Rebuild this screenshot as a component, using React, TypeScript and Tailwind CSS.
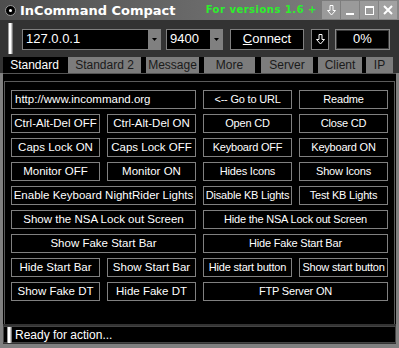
import React from "react";

type Cell = { label: string; span?: boolean; input?: boolean; tight?: boolean };

const rows: Cell[][] = [
  [{ label: "http://www.incommand.org", span: true, input: true }, { label: "<-- Go to URL", tight: true }, { label: "Readme", tight: true }],
  [{ label: "Ctrl-Alt-Del OFF" }, { label: "Ctrl-Alt-Del ON" }, { label: "Open CD", tight: true }, { label: "Close CD", tight: true }],
  [{ label: "Caps Lock ON" }, { label: "Caps Lock OFF" }, { label: "Keyboard OFF", tight: true }, { label: "Keyboard ON", tight: true }],
  [{ label: "Monitor OFF" }, { label: "Monitor ON" }, { label: "Hides Icons", tight: true }, { label: "Show Icons", tight: true }],
  [{ label: "Enable Keyboard NightRider Lights", span: true }, { label: "Disable KB Lights", tight: true }, { label: "Test KB Lights", tight: true }],
  [{ label: "Show the NSA Lock out Screen", span: true }, { label: "Hide the NSA Lock out Screen", span: true, tight: true }],
  [{ label: "Show Fake Start Bar", span: true }, { label: "Hide Fake Start Bar", span: true, tight: true }],
  [{ label: "Hide Start Bar" }, { label: "Show Start Bar" }, { label: "Hide start button", tight: true }, { label: "Show start button", tight: true }],
  [{ label: "Show Fake DT" }, { label: "Hide Fake DT" }, { label: "FTP Server ON", span: true, tight: true }],
];

const tabs = [
  { t: "Standard", c: "w-[63px]" },
  { t: "Standard 2", c: "ml-[2px] w-[73px]" },
  { t: "Message", c: "ml-[5px] w-[53px]" },
  { t: "More", c: "ml-[5px] w-[51px]" },
  { t: "Server", c: "ml-[6px] w-[52px]" },
  { t: "Client", c: "ml-[5px] w-[44px]" },
  { t: "IP", c: "ml-[4px] w-[27px]" },
];

function Grip({ h }: { h: string }) {
  return (
    <div className={`flex ${h} shrink-0`}>
      <div className="w-[1px] bg-[#9a9a9a]" />
      <div className="w-[2px] bg-white" />
      <div className="w-[1px] bg-[#c8c8c8]" />
      <div className="w-[1px] bg-[#7a7a7a]" />
    </div>
  );
}

function DownArrow({ color = "white" }: { color?: string }) {
  return (
    <svg width="9" height="11" viewBox="0 0 9 11">
      <path d="M3 0.5 H6 V5.5 H8.5 L4.5 10 L0.5 5.5 H3 Z" fill="none" stroke={color} strokeWidth="1" />
    </svg>
  );
}

function Combo({ value, w }: { value: string; w: string }) {
  return (
    <div className={`flex ${w} h-[21px] border border-[#808080] bg-black`}>
      <div className="flex-1 flex items-center pl-[3px] text-white text-[13px]">{value}</div>
      <div className="w-[12px] bg-[#808080] flex items-center justify-center">
        <svg width="5" height="3" viewBox="0 0 5 3">
          <path d="M0 0 H5 L2.5 3 Z" fill="#000" />
        </svg>
      </div>
    </div>
  );
}

export default function App() {
  return (
    <div
      className="w-[399px] h-[348px] bg-[#808080] flex flex-col overflow-hidden"
      style={{ fontFamily: '"Liberation Sans", Arial, sans-serif' }}
    >
      {/* Title bar */}
      <div className="h-[20px] flex items-center bg-gradient-to-r from-[#4e4e4e] via-[#6a6a6a] to-[#868686]">
        <div className="ml-[5px] w-[11px] h-[11px] rounded-full bg-black flex items-center justify-center border border-[#9a9a9a]">
          <div className="w-[3px] h-[3px] rounded-full bg-white" />
        </div>
        <div
          className="ml-[4px] text-white text-[13px] font-bold leading-none"
          style={{ fontFamily: '"DejaVu Sans", Verdana, sans-serif' }}
        >
          InCommand Compact
        </div>
        <div
          className="ml-auto mr-[5px] text-[#2cf02c] text-[10px] font-bold leading-none tracking-[0.5px]"
          style={{ fontFamily: '"DejaVu Sans", Verdana, sans-serif' }}
        >
          For versions 1.6 +
        </div>
        <div className="flex h-[18px] gap-[1px] mr-[2px]">
          <div className="w-[18px] bg-[#9a9a9a] flex items-center justify-center">
            <DownArrow />
          </div>
          <div className="w-[18px] bg-[#9a9a9a] flex items-end justify-center pb-[4px]">
            <div className="w-[8px] h-[2px] bg-white" />
          </div>
          <div className="w-[18px] bg-[#9a9a9a] flex items-center justify-center">
            <div className="w-[9px] h-[9px] border border-white border-t-2" />
          </div>
          <div className="w-[18px] bg-[#a2a2a2] flex items-center justify-center">
            <svg width="10" height="10" viewBox="0 0 10 10">
              <path d="M1 1 L9 9 M9 1 L1 9" stroke="white" strokeWidth="2" />
            </svg>
          </div>
        </div>
      </div>

      {/* Toolbar */}
      <div className="h-[37px] bg-[#333333] flex items-center pl-[8px]">
        <Grip h="h-[31px]" />
        <div className="ml-[9px] mt-[1px] flex items-center">
          <Combo value="127.0.0.1" w="w-[139px]" />
          <div className="ml-[5px]">
            <Combo value="9400" w="w-[57px]" />
          </div>
          <div className="ml-[7px] w-[74px] h-[21px] border border-[#808080] bg-black flex items-center justify-center text-white text-[13px]">
            <span className="underline underline-offset-[1px]">C</span>onnect
          </div>
          <div className="ml-[7px] w-[18px] h-[21px] border border-[#808080] bg-black flex items-center justify-center">
            <DownArrow />
          </div>
          <div className="ml-[6px] w-[55px] h-[21px] border border-[#8a8a8a] bg-black shadow-[inset_0_0_0_1px_#3a3a3a] flex items-center justify-center text-white text-[13px]">
            0%
          </div>
        </div>
      </div>

      {/* Tabs */}
      <div className="h-[16px] flex bg-[#333333] px-[3px]">
        <div className="h-full flex bg-black">
          {tabs.map((tab, i) => (
            <div
              key={tab.t}
              className={`${tab.c} text-[12px] leading-[16px] text-center ${
                i === 0 ? "bg-black text-white" : "bg-[#7c7c7c] text-[#1a1a1a]"
              }`}
            >
              {tab.t}
            </div>
          ))}
        </div>
      </div>

      {/* Panel */}
      <div className="mx-[3px] h-[251px] bg-black border-t border-[#555555] pt-[7px]">
        <div className="h-[243px] ml-[1px] mr-[1px] border-t border-l border-r border-[#5a5a5a] pt-[8px] pl-[6px]">
          <div className="grid grid-cols-[89px_89px_89px_89px] gap-x-[7px] gap-y-[5px] auto-rows-[19px]">
            {rows.flat().map((c, i) => (
              <div
                key={i}
                className={`border border-[#808080] bg-black text-white flex items-center whitespace-nowrap overflow-hidden ${
                  c.span ? "col-span-2" : ""
                } ${c.input ? "justify-start pl-[3px]" : "justify-center"} ${
                  c.tight ? "text-[11px] tracking-[-0.2px]" : "text-[11.5px]"
                }`}
              >
                {c.label}
              </div>
            ))}
          </div>
        </div>
      </div>

      {/* Status bar */}
      <div className="mx-[3px] h-[20px] bg-[#333333] pt-[2px] pb-[1px]">
        <div className="h-full border border-[#444444] bg-black flex items-center pl-[3px]">
          <Grip h="h-[16px]" />
          <span className="ml-[3px] text-white text-[12px]">Ready for action...</span>
        </div>
      </div>
    </div>
  );
}
